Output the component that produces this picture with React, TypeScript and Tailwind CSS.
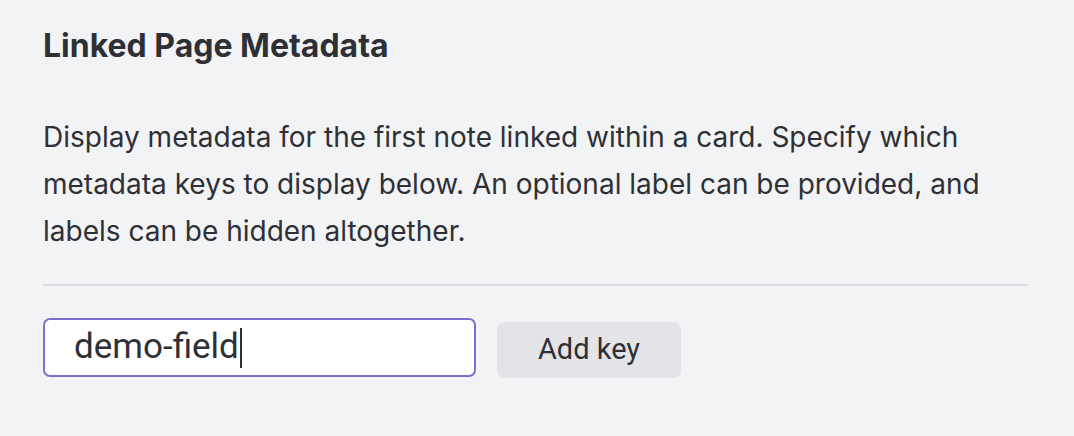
export default function App() {
  return (
    <div className="min-h-[436px] w-[1074px] bg-[#f2f3f5] px-[43px] pt-[28px] font-['Inter',sans-serif] text-[#2e3035]">
      <div className="w-[985px]">
        <h2 className="text-[32px] leading-[36px] font-bold">Linked Page Metadata</h2>
        <p className="mt-[50px] text-[28px] leading-[47px] whitespace-nowrap">
          Display metadata for the first note linked within a card. Specify which
          <br />
          metadata keys to display below. An optional label can be provided, and
          <br />
          labels can be hidden altogether.
        </p>
        <div className="mt-[29px] h-[2px] bg-[#dcdde0]" />
        <div className="mt-[32px] flex items-start gap-[21px]">
          <div className="flex h-[59px] w-[433px] items-center rounded-[7px] border-2 border-[#7b6fd3] bg-white pl-[29px]">
            <span className="font-['Roboto',sans-serif] text-[35px] text-[#2e3035]">demo-field</span>
            <span className="ml-px h-[40px] w-[2px] bg-[#2e3035]" />
          </div>
          <button className="mt-[4px] flex h-[56px] w-[184px] items-center justify-center rounded-[8px] bg-[#e3e4e8] font-['Roboto',sans-serif] text-[29px] text-[#2e3035]">
            Add key
          </button>
        </div>
      </div>
    </div>
  )
}
